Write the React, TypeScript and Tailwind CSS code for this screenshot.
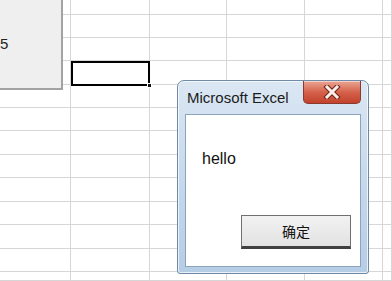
const colWidths = [71, 79, 77, 78, 78, 9];
const rowHeights = [15, 23, 23, 24, 23, 23, 24, 23, 24, 23, 24, 23, 9];

function Sheet() {
  return (
    <div className="grid grid-cols-[71px_79px_77px_78px_78px_9px]">
      {rowHeights.map((h, r) =>
        colWidths.map((_, c) => (
          <div
            key={`${r}-${c}`}
            className="border-r border-b border-[#d6d6d6] bg-white"
            style={{ height: h }}
          />
        ))
      )}
    </div>
  );
}

function CloseButton() {
  return (
    <div className="flex h-[23px] w-[58px] items-center justify-center rounded-b-[5px] border border-t-0 border-[#8a3a2c] bg-gradient-to-b from-[#e9a593] via-[#d4624b] to-[#c2412c] shadow-[inset_0_1px_0_rgba(255,255,255,0.5)]">
      <svg width="18" height="14" viewBox="0 0 18 14">
        <path d="M4 2 L14 12 M14 2 L4 12" stroke="#6b2318" strokeWidth="5" strokeLinecap="square" />
        <path d="M4 2 L14 12 M14 2 L4 12" stroke="#fbeeea" strokeWidth="3" strokeLinecap="square" />
      </svg>
    </div>
  );
}

function MessageBox() {
  return (
    <div className="absolute left-[177px] top-[80px] flex h-[194px] w-[192px] flex-col rounded-t-[7px] rounded-b-[3px] border border-[#6f8aa6] bg-gradient-to-b from-[#dbe7f3] via-[#c6d9ed] to-[#b6cde6] shadow-[inset_0_0_0_1px_rgba(255,255,255,0.7)]">
      <div className="flex h-[33px] items-start justify-between pl-[9px] pr-[7px]">
        <span className="pt-[9px] font-['Liberation_Sans',Arial,sans-serif] text-[15px] leading-[16px] text-[#1b1b1b]">
          Microsoft Excel
        </span>
        <CloseButton />
      </div>
      <div className="mx-[7px] mb-[6px] flex flex-1 flex-col border border-[#8ba3bd] bg-white">
        <p className="pl-[16px] pt-[35px] font-['Liberation_Sans',Arial,sans-serif] text-[16px] leading-[18px] text-[#111]">
          hello
        </p>
        <div className="mt-auto mb-[17px] flex justify-end pr-[9px]">
          <button className="flex h-[34px] w-[110px] items-center justify-center border border-[#707070] border-b-[3px] border-b-[#404040] bg-gradient-to-b from-[#f2f2f2] to-[#e2e2e2] font-['Noto_Sans_CJK_SC',sans-serif] text-[14px] text-[#111]">
            确定
          </button>
        </div>
      </div>
    </div>
  );
}

export default function App() {
  return (
    <div className="relative h-[281px] w-[392px] overflow-hidden bg-white">
      <Sheet />
      <div className="absolute left-0 top-0 flex h-[90px] w-[63px] items-center border-r-2 border-b-2 border-[#a3a3a3] bg-[#efefef]">
        <span className="font-['Liberation_Sans',Arial,sans-serif] text-[15px] text-[#222]">5</span>
      </div>
      <div className="absolute left-[71px] top-[61px] h-[25px] w-[79px] border-2 border-[#000]" />
      <div className="absolute left-[147px] top-[83px] h-[5px] w-[5px] border border-white bg-[#111]" />
      <MessageBox />
    </div>
  );
}
